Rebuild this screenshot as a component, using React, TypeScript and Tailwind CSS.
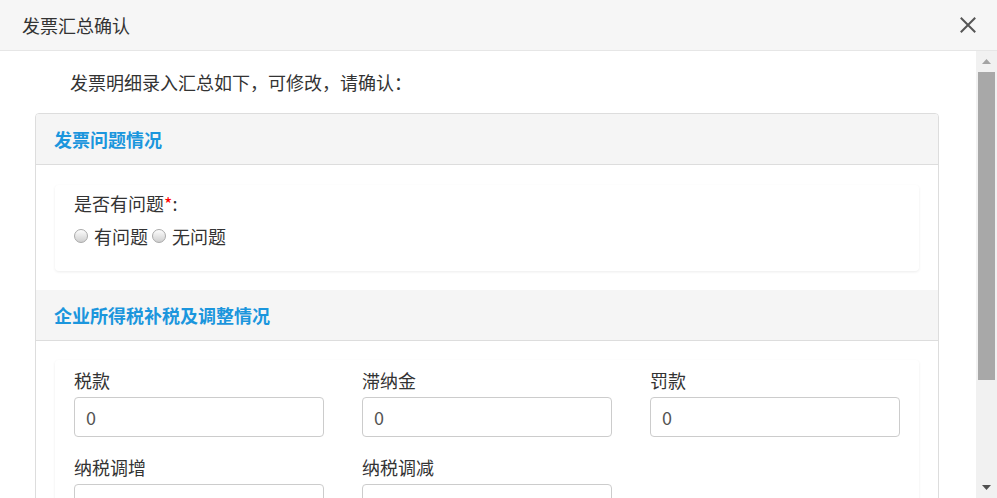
import React from "react";

function Radio({ label }: { label: string }) {
  return (
    <span className="inline-flex items-center">
      <span className="inline-block w-[14px] h-[14px] rounded-full border border-[#a9a9a9] bg-linear-to-b from-[#fdfdfd] to-[#cfcfcf]" />
      <span className="ml-[6px]">{label}</span>
    </span>
  );
}

function Field({ label, value }: { label: string; value: string }) {
  return (
    <div className="flex flex-col">
      <div className="leading-[24px] text-[18px] text-[#333]">{label}</div>
      <div className="mt-[5px] h-[40px] border border-[#ccc] rounded-[4px] flex items-center pl-[11px] text-[18px] text-[#555]">
        {value}
      </div>
    </div>
  );
}

function SectionHeader({ title }: { title: string }) {
  return (
    <div className="h-[51px] bg-[#f5f5f5] border-b border-[#dddddd] flex items-center pl-[18px]">
      <span className="text-[18px] font-bold text-[#1b96dd] leading-[24px]">{title}</span>
    </div>
  );
}

export default function App() {
  return (
    <div className="w-[997px] h-[498px] overflow-hidden bg-white flex flex-col font-['Noto_Sans_CJK_SC','Microsoft_YaHei',sans-serif] text-[#333]">
      <div className="h-[51px] shrink-0 bg-[#f6f6f6] border-b border-[#e6e6e6] flex items-center justify-between pl-[22px] pr-[21px]">
        <span className="text-[18px] leading-[24px] text-[#333]">发票汇总确认</span>
        <svg width="16" height="16" viewBox="0 0 16 16" className="block">
          <path d="M1.5 1.5 L14.5 14.5 M14.5 1.5 L1.5 14.5" stroke="#555" strokeWidth="2" strokeLinecap="square" />
        </svg>
      </div>
      <div className="flex-1 flex overflow-hidden">
        <div className="flex-1 overflow-hidden">
          <div className="pt-[19px] pl-[70px] text-[18px] leading-[24px] text-[#333]">
            发票明细录入汇总如下，可修改，请确认：
          </div>
          <div className="mt-[19px] ml-[35px] w-[904px] border border-[#dddddd] rounded-[4px] overflow-hidden">
            <SectionHeader title="发票问题情况" />
            <div className="px-[19px] pt-[20px] pb-[19px]">
              <div className="rounded-[4px] shadow-[0_1px_3px_rgba(0,0,0,0.08)] pl-[19px] pt-[6px] pb-[23px] text-[18px] leading-[24px]">
                <div>
                  是否有问题<span className="text-[#ff0000]">*</span>:
                </div>
                <div className="mt-[9px] flex items-center gap-[4px]">
                  <Radio label="有问题" />
                  <Radio label="无问题" />
                </div>
              </div>
            </div>
            <SectionHeader title="企业所得税补税及调整情况" />
            <div className="px-[19px] pt-[19px] pb-[19px]">
              <div className="rounded-[4px] shadow-[0_1px_3px_rgba(0,0,0,0.08)] pl-[19px] pr-[18px] pt-[8px] pb-[20px]">
                <div className="grid grid-cols-[250px_250px_250px] gap-x-[38px] gap-y-[18px]">
                  <Field label="税款" value="0" />
                  <Field label="滞纳金" value="0" />
                  <Field label="罚款" value="0" />
                  <Field label="纳税调增" value="" />
                  <Field label="纳税调减" value="0" />
                </div>
              </div>
            </div>
          </div>
        </div>
        <div className="w-[21px] shrink-0 bg-[#f1f1f1] flex flex-col items-center relative">
          <div className="h-[21px] w-full flex items-center justify-center">
            <svg width="9" height="5" viewBox="0 0 9 5">
              <path d="M0 5 L4.5 0 L9 5 Z" fill="#a3a3a3" />
            </svg>
          </div>
          <div className="ml-[2px] mr-[2px] w-[17px] h-[308px] bg-[#a8a8a8]" />
          <div className="flex-1" />
          <div className="h-[21px] w-full flex items-center justify-center">
            <svg width="9" height="5" viewBox="0 0 9 5">
              <path d="M0 0 L9 0 L4.5 5 Z" fill="#505050" />
            </svg>
          </div>
        </div>
      </div>
    </div>
  );
}
